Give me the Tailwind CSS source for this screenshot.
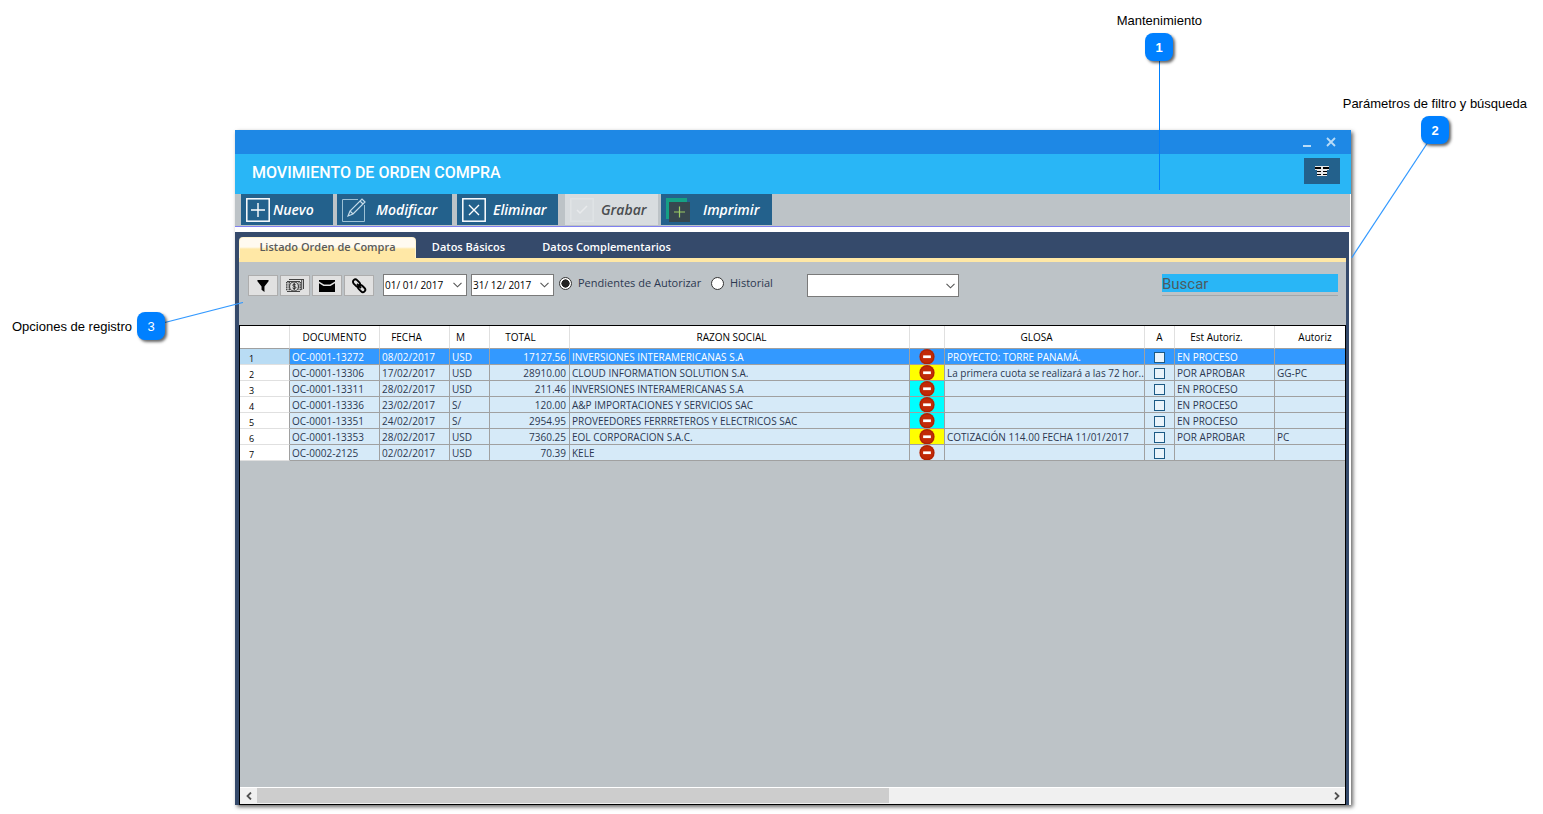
<!DOCTYPE html>
<html lang="es">
<head>
<meta charset="utf-8">
<title>Movimiento de Orden Compra</title>
<script src="https://cdn.jsdelivr.net/npm/@tailwindcss/browser@4"></script>
</head>
<body class="relative flex min-h-screen flex-col bg-white font-['Open_Sans',sans-serif] text-[#2c3850]">
<svg class="hidden">
  <symbol id="chev" viewBox="0 0 9 6"><path d="M.5.8 4.5 4.8 8.5.8" fill="none" stroke="#555" stroke-width="1.1"/></symbol>
  <symbol id="minus" viewBox="0 0 16 16"><circle cx="8" cy="8" r="8" fill="#c22a08"/><circle cx="8" cy="8" r="7" fill="none" stroke="#a82206" stroke-width="1"/><rect x="4" y="6.6" width="8" height="2.8" fill="#fff"/></symbol>
</svg>

<main class="mt-[130px] mr-[192px] mb-[9px] ml-[235px] flex flex-1 flex-col bg-white shadow-[2px_2px_4px_rgba(0,0,0,0.6)]">
  <div class="flex h-6 items-center justify-end gap-3 bg-[#1e88e5] pr-3.5">
    <button aria-label="Minimizar" class="flex h-3 w-3 items-end justify-center"><svg class="h-3 w-3" viewBox="0 0 12 12"><path d="M2 10h8" stroke="#b9dcf8" stroke-width="2"/></svg></button>
    <button aria-label="Cerrar" class="flex h-3 w-3 items-center justify-center"><svg class="h-3 w-3" viewBox="0 0 12 12"><path d="M2 2l8 8M10 2l-8 8" stroke="#b9dcf8" stroke-width="1.8"/></svg></button>
  </div>
  <div class="flex h-10 items-center justify-between bg-[#29b6f6] pr-[11px] pl-[17px]">
    <h1 class="mb-0.5 font-[Roboto,sans-serif] text-base leading-5 font-medium text-white">MOVIMIENTO DE ORDEN COMPRA</h1>
    <button aria-label="Columnas" class="mb-1.5 flex h-[26px] w-9 items-center justify-center bg-[#23618c]">
      <svg class="h-[10px] w-[14px]" viewBox="0 0 14 10"><path d="M0 0h14v4h-2v6H2V4H0z" fill="#e8e8e8"/><path d="M0 1h6v2H0zM8 1h6v2H8zM2 5h4v1H2zM8 5h4v1H8zM2 8h4v1H2zM8 8h4v1H8z" fill="#000"/></svg>
    </button>
  </div>
  <div class="mr-px flex h-[33px] items-start border-b border-[#8080f0] bg-[#bdc3c7] pl-1.5 text-sm font-semibold text-white italic">
    <button class="mr-1 flex h-[31px] w-[92px] items-center gap-[3px] bg-[#23618c] pl-[5px]">
      <svg class="h-6 w-6" viewBox="0 0 24 24" fill="none" stroke="#fff"><rect x=".8" y=".8" width="22.4" height="22.4" stroke-width="1.5"/><path d="M12 5v14M5 12h14" stroke-width="1.4"/></svg>Nuevo</button>
    <button class="mr-[5px] flex h-[31px] w-[115px] items-center gap-[10px] bg-[#23618c] pl-[5px]">
      <svg class="h-6 w-6" viewBox="0 0 24 24" fill="none" stroke="#c5dbe9"><path d="M16 1.5H.5v22h22V7" stroke="#9cc0d4"/><path d="M6 18l2-5L20 1l3 3-12 12zM8 13l3 3M18 3l3 3" stroke-width="1.2"/></svg>Modificar</button>
    <button class="mr-[7px] flex h-[31px] w-[101px] items-center gap-[7px] bg-[#23618c] pl-[5px]">
      <svg class="h-6 w-6" viewBox="0 0 24 24" fill="none" stroke="#fff"><rect x=".8" y=".8" width="22.4" height="22.4" stroke-width="1.5"/><path d="M7 7l10 10M17 7L7 17" stroke-width="1.4"/></svg>Eliminar</button>
    <button disabled class="mr-[3px] flex h-[31px] w-[93px] items-center gap-[7px] bg-[#d8dcdf] pl-[5px] text-[#4a4d50]">
      <svg class="h-6 w-6" viewBox="0 0 24 24" fill="none" stroke="#e0e3e5"><rect x=".8" y=".8" width="22.4" height="22.4" stroke-width="1.5"/><path d="M7 12l3 3 7-7" stroke="#e8eaec" stroke-width="1.5"/></svg>Grabar</button>
    <button class="flex h-[31px] w-[111px] items-center gap-[13px] bg-[#23618c] pl-[5px]">
      <svg class="h-6 w-6" viewBox="0 0 24 24"><path d="M0 0h21v21H0z" fill="#16a085"/><path d="M3 4h21v20H3z" fill="#37474f"/><path d="M13.5 8.500v11M8 14h11" stroke="#9ccc65" stroke-width="1.2"/></svg>Imprimir</button>
  </div>

  <div class="mt-[5px] mr-0.5 flex flex-1 flex-col bg-[#354a6b] pr-[3px] pl-1">
    <div role="tablist" class="flex h-[26px] items-end text-[11px] leading-4 font-semibold text-white">
      <button role="tab" aria-selected="true" class="h-[21px] w-[177px] rounded-t border border-b-0 border-[#fff3cf] bg-linear-to-b from-[#fffaf0] from-45% to-[#ffe8a6] to-55% pb-0.5 text-[#5a5a5a]">Listado Orden de Compra</button>
      <button role="tab" class="h-[21px] w-[105px] pb-0.5">Datos Básicos</button>
      <button role="tab" class="h-[21px] w-[171px] pb-0.5">Datos Complementarios</button>
    </div>
    <div class="flex h-[67px] items-start border-t-4 border-[#ffe8a6] bg-[#bdc3c7] pt-3 pr-2 pl-[9px]">
      <div class="mt-px mr-[9px] flex gap-0.5">
        <button aria-label="Filtrar" class="flex h-[21px] w-[30px] items-center justify-center border border-[#adadad] bg-[#e1e1e1]"><svg class="h-3 w-3" viewBox="0 0 14 14"><path d="M.5 0h13v1.500L8.700 7.500V14L5.300 11.500v-4L.5 1.500z"/></svg></button>
        <button aria-label="Pagos" class="flex h-[21px] w-[30px] items-center justify-center border border-[#adadad] bg-[#e1e1e1]"><svg class="h-4 w-[18px]" viewBox="0 0 18 16" fill="none" stroke="#444"><path d="M17.500 1v10M15.700 2v10M1 3.500h13M1 13.500h13M3 1.500h14" stroke-width="1"/><path d="M.5 4v9M2 4v9M3.500 4v9M13 4v9M14.500 4v9" stroke-dasharray="1.500 .7"/><circle cx="8" cy="8.500" r="4.500" stroke-width="1.200" fill="#ddd"/><path d="M9.800 7c-1-1.200-3.500-.8-3 .5.400 1 3 .8 3.100 1.900.1 1.300-2.200 1.600-3.300.5M8.200 5v7" stroke="#222" stroke-width="1"/></svg></button>
        <button aria-label="Correo" class="flex h-[21px] w-[30px] items-center justify-center border border-[#adadad] bg-[#e1e1e1]"><svg class="h-3 w-4" viewBox="0 0 16 12"><path d="M0 0h16v1.500L11 4.500H5L0 1.500zM0 3.200 4.500 6h7L16 3.200V12H0z"/></svg></button>
        <button aria-label="Vincular" class="flex h-[21px] w-[30px] items-center justify-center border border-[#adadad] bg-[#e1e1e1]"><svg class="h-4 w-4" viewBox="0 0 16 16" fill="none" stroke="#000" stroke-width="1.900"><rect x="1.500" y="2.600" width="8" height="4.800" rx="2.400" transform="rotate(45 5.500 5)"/><rect x="6.700" y="8.200" width="8" height="4.800" rx="2.400" transform="rotate(45 10.700 10.600)"/><path d="M6 6l4 4"/></svg></button>
      </div>
      <div class="mr-1 flex h-[22px] w-[84px] items-center border border-[#7a7a7a] bg-white pr-1">
        <input aria-label="Desde" value="01/ 01/ 2017" class="min-w-0 flex-1 pl-px text-[10px] leading-4 text-black outline-none">
        <button aria-label="Abrir calendario"><svg class="h-1.5 w-[9px]"><use href="#chev"/></svg></button>
      </div>
      <div class="mr-[5px] flex h-[22px] w-[83px] items-center border border-[#7a7a7a] bg-white pr-1">
        <input aria-label="Hasta" value="31/ 12/ 2017" class="min-w-0 flex-1 pl-px text-[10px] leading-4 text-black outline-none">
        <button aria-label="Abrir calendario"><svg class="h-1.5 w-[9px]"><use href="#chev"/></svg></button>
      </div>
      <label class="flex h-[18px] w-[152px] items-center gap-1.5 text-[11px] whitespace-nowrap"><input type="radio" name="estado" checked class="h-[13px] w-[13px] shrink-0 appearance-none rounded-full border border-[#333] bg-white checked:bg-radial checked:from-[#222] checked:from-50% checked:to-white checked:to-55%">Pendientes de Autorizar</label>
      <label class="flex h-[18px] w-24 items-center gap-1.5 text-[11px]"><input type="radio" name="estado" class="h-[13px] w-[13px] appearance-none rounded-full border border-[#333] bg-white">Historial</label>
      <div class="relative">
        <select aria-label="Selección" class="block h-[23px] w-[152px] appearance-none border border-[#7a7a7a] bg-white text-xs"><option></option></select>
        <svg class="pointer-events-none absolute top-[9px] right-1 h-1.5 w-[9px]"><use href="#chev"/></svg>
      </div>
      <div class="ml-auto w-[176px] border-b border-[#a3a7aa] pb-[3px]">
        <input type="search" aria-label="Buscar" placeholder="Buscar" class="block h-[18px] w-full bg-[#29b6f6] pt-0.5 font-[Roboto,sans-serif] text-[15px] leading-4 outline-none placeholder:text-[#4d5b61]">
      </div>
    </div>

    <div class="flex flex-1 flex-col border border-black bg-[#bdc3c7]">
      <table class="w-full table-fixed border-separate border-spacing-0 bg-[#d6eaf8] text-[10px] leading-[14px] whitespace-nowrap">
        <colgroup><col class="w-[50px]"><col class="w-[90px]"><col class="w-[70px]"><col class="w-[40px]"><col class="w-[80px]"><col class="w-[340px]"><col class="w-[35px]"><col class="w-[200px]"><col class="w-[30px]"><col class="w-[100px]"><col></colgroup>
        <thead class="bg-white text-black [&_th]:h-[23px] [&_th]:border-r [&_th]:border-b [&_th]:border-r-[#e0e0e0] [&_th]:border-b-[#a0a0a0] [&_th]:p-0 [&_th]:font-normal">
          <tr><th></th><th>DOCUMENTO</th><th class="pr-4!">FECHA</th><th class="pr-[18px]!">M</th><th class="pr-[18px]!">TOTAL</th><th class="pr-4!">RAZON SOCIAL</th><th></th><th class="pr-4!">GLOSA</th><th>A</th><th class="pr-4!">Est Autoriz.</th><th class="border-r-0! pl-[10px]!">Autoriz</th></tr>
        </thead>
        <tbody id="rows" class="[&_td]:h-4 [&_td]:overflow-hidden [&_td]:border-r [&_td]:border-b [&_td]:border-[#a0a0a0] [&_td]:p-0 [&_td:last-child]:border-r-0 [&_th]:border-r [&_th]:border-b [&_th]:border-r-[#a0a0a0] [&_th]:border-b-[#e0e0e0] [&_th]:p-0 [&_th]:pl-[9px] [&_th]:text-left [&_th]:align-bottom [&_th]:font-normal [&_th]:text-black [&_td]:align-bottom"></tbody>
      </table>
      <div class="mt-auto flex h-[17px] items-center border-t border-white bg-[#f0f0f0]">
        <button aria-label="Desplazar a la izquierda" class="flex h-full w-[17px] items-center justify-center"><svg class="h-2 w-1.5" viewBox="0 0 6 8"><path d="M5 .5 1.500 4 5 7.500" fill="none" stroke="#505050" stroke-width="1.800"/></svg></button>
        <div class="flex h-full flex-1 items-start"><div class="h-[15px] w-[59%] bg-[#cdcdcd]"></div></div>
        <button aria-label="Desplazar a la derecha" class="flex h-full w-[17px] items-center justify-center"><svg class="h-2 w-1.5" viewBox="0 0 6 8"><path d="M1 .5 4.500 4 1 7.500" fill="none" stroke="#505050" stroke-width="1.800"/></svg></button>
      </div>
    </div>
  </div>
</main>

<!-- Callouts over the window -->
<div class="absolute top-[13px] right-[341px] font-['Liberation_Sans',sans-serif] text-[13px] leading-4 text-black">Mantenimiento</div>
<div class="absolute top-[47px] right-[383px] h-[143px] w-px bg-[#0080ff]"></div>
<div class="absolute top-[33px] right-[370px] flex h-7 w-7 items-center justify-center rounded-lg bg-[#0080ff] pt-0.5 font-['Liberation_Sans',sans-serif] text-[13px] font-bold text-white shadow-[2px_2px_3px_rgba(0,0,0,0.6)]">1</div>
<div class="absolute top-24 right-4 font-['Liberation_Sans',sans-serif] text-[13px] leading-4 text-black">Parámetros de filtro y búsqueda</div>
<svg class="absolute top-[130px] right-[107px] h-32 w-[85px]"><path d="M85 0 .5 128" stroke="#3399ff" stroke-width="1.200"/></svg>
<div class="absolute top-[116px] right-[94px] flex h-7 w-7 items-center justify-center rounded-lg bg-[#0080ff] pt-0.5 font-['Liberation_Sans',sans-serif] text-[13px] font-bold text-white shadow-[2px_2px_3px_rgba(0,0,0,0.6)]">2</div>
<div class="absolute top-[319px] left-3 font-['Liberation_Sans',sans-serif] text-[13px] leading-4 text-black">Opciones de registro</div>
<svg class="absolute top-[302px] left-[151px] h-6 w-[92px]"><path d="M0 24 92 .5" stroke="#3399ff" stroke-width="1.200"/></svg>
<div class="absolute top-[312px] left-[137px] flex h-7 w-7 items-center justify-center rounded-lg bg-[#0080ff] pt-0.5 font-['Liberation_Sans',sans-serif] text-[13px] text-white shadow-[2px_2px_3px_rgba(0,0,0,0.6)]">3</div>

<script>
const data = [
  ["OC-0001-13272","08/02/2017","USD","17127.56","INVERSIONES INTERAMERICANAS S.A","","PROYECTO: TORRE PANAMÁ.","EN PROCESO",""],
  ["OC-0001-13306","17/02/2017","USD","28910.00","CLOUD INFORMATION SOLUTION S.A.","bg-[#ffff00]","La primera cuota se realizará a las 72 hor...","POR APROBAR","GG-PC"],
  ["OC-0001-13311","28/02/2017","USD","211.46","INVERSIONES INTERAMERICANAS S.A","bg-[#00ffff]","","EN PROCESO",""],
  ["OC-0001-13336","23/02/2017","S/","120.00","A&amp;P IMPORTACIONES Y SERVICIOS SAC","bg-[#00ffff]","","EN PROCESO",""],
  ["OC-0001-13351","24/02/2017","S/","2954.95","PROVEEDORES FERRRETEROS Y ELECTRICOS SAC","bg-[#00ffff]","","EN PROCESO",""],
  ["OC-0001-13353","28/02/2017","USD","7360.25","EOL CORPORACION S.A.C.","bg-[#ffff00]","COTIZACIÓN 114.00 FECHA 11/01/2017","POR APROBAR","PC"],
  ["OC-0002-2125","02/02/2017","USD","70.39","KELE","","","",""]
];
const text = (t) => `<span class="block pl-0.5">${t}</span>`;
document.getElementById("rows").innerHTML = data.map((r, i) => `
<tr class="${i === 0 ? "bg-[#3399ff] text-white" : ""}"><th scope="row" class="${i === 0 ? "bg-[#b9dcf4]" : "bg-white"}"><span class="block h-[15px] text-[9px] leading-[20px]">${i + 1}</span></th>
<td>${text(r[0])}</td><td>${text(r[1])}</td><td>${text(r[2])}</td><td class="pr-[3px]! text-right">${r[3]}</td><td>${text(r[4])}</td>
<td class="${r[5]}"><svg class="mx-auto block h-[15px] w-4" viewBox="0 0 16 15.500"><use href="#minus" width="16" height="16"/></svg></td>
<td>${text(r[6])}</td>
<td><input type="checkbox" aria-label="Autorizado ${i + 1}" class="mx-auto mb-px block h-[11px] w-[11px] appearance-none border border-[#1c5a85] bg-[#eaf4fb]"></td>
<td>${text(r[7])}</td><td>${text(r[8])}</td></tr>`).join("");
</script>
</body>
</html>
